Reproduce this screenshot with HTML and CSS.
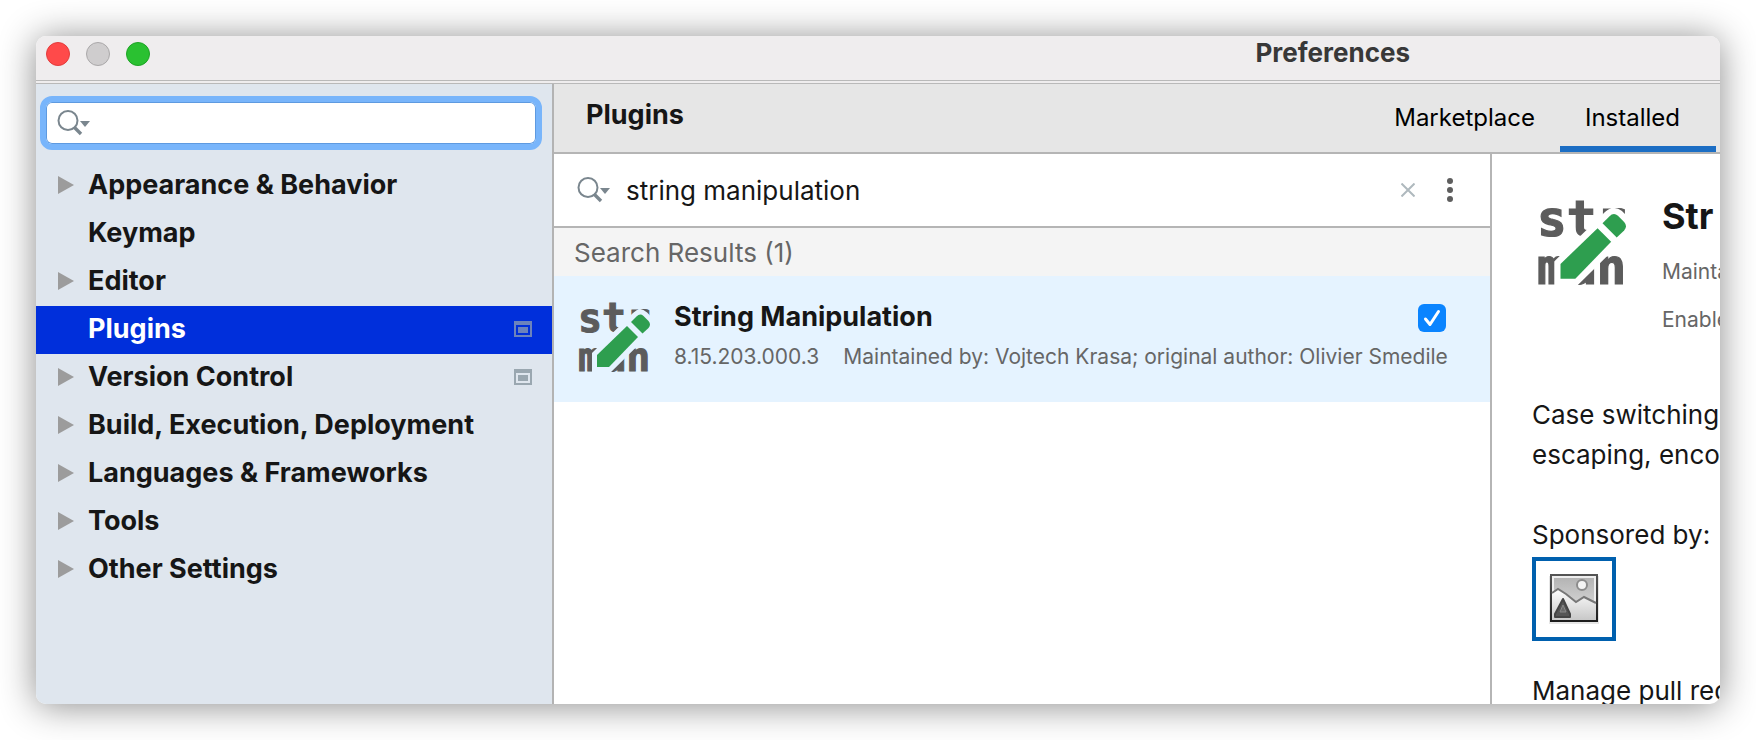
FILE: index.html
```html
<!DOCTYPE html>
<html lang="en">
<head>
<meta charset="utf-8">
<title>Preferences</title>
<link rel="stylesheet" href="styles.css">
</head>
<body>
<svg class="defs" aria-hidden="true">
  <symbol id="search" viewBox="0 0 34 26">
    <circle cx="11" cy="10.500" r="9.500" fill="none" stroke="#7a868e" stroke-width="2"/>
    <path d="M17 17l7 7" stroke="#7a868e" stroke-width="3.400" fill="none"/>
    <path d="M23 11h10l-5 6z" fill="#7a868e"/>
  </symbol>
  <symbol id="arrow" viewBox="0 0 16 18"><path d="M0 0l16 9-16 9z" fill="#9c9c9c"/></symbol>
  <symbol id="project" viewBox="0 0 18 16">
    <path fill="#9aa7b0" fill-rule="evenodd" d="M0 0h18v16H0zM2 4v10h14V4z"/>
    <path fill="#9aa7b0" d="M4 6h10v6H4z"/>
  </symbol>
  <symbol id="pencil" viewBox="0 0 72 72">
    <path class="halo" d="M19 55L58.500 16.500Q62 13 65.500 16L70.500 21Q73.500 24.500 70.500 28L31 67H19z"/>
    <path fill="#2e9e4f" d="M19 55L49 26L60 37L31 67H19z"/>
    <path fill="#2e9e4f" d="M53 22L58.500 16.500Q62 13 65.500 16L70.500 21Q73.500 24.500 70.500 28L64.500 33.500z"/>
  </symbol>
</svg>
<div class="window">
  <header class="titlebar">
    <div class="lights">
      <button class="light close" aria-label="Close"></button>
      <button class="light minimize" aria-label="Minimize"></button>
      <button class="light maximize" aria-label="Zoom"></button>
    </div>
    <div class="window-title">Preferences</div>
  </header>
  <div class="body">
    <aside class="sidebar">
      <div class="settings-search">
        <svg class="search-icon"><use href="#search"/></svg>
        <input type="text" aria-label="Search settings">
      </div>
      <nav>
        <ul class="tree">
          <li><button class="node"><svg class="arrow"><use href="#arrow"/></svg><span class="label">Appearance &amp; Behavior</span></button></li>
          <li><button class="node"><span class="arrow"></span><span class="label">Keymap</span></button></li>
          <li><button class="node"><svg class="arrow"><use href="#arrow"/></svg><span class="label">Editor</span></button></li>
          <li><button class="node selected"><span class="arrow"></span><span class="label">Plugins</span><svg class="project"><use href="#project"/></svg></button></li>
          <li><button class="node"><svg class="arrow"><use href="#arrow"/></svg><span class="label">Version Control</span><svg class="project"><use href="#project"/></svg></button></li>
          <li><button class="node"><svg class="arrow"><use href="#arrow"/></svg><span class="label">Build, Execution, Deployment</span></button></li>
          <li><button class="node"><svg class="arrow"><use href="#arrow"/></svg><span class="label">Languages &amp; Frameworks</span></button></li>
          <li><button class="node"><svg class="arrow"><use href="#arrow"/></svg><span class="label">Tools</span></button></li>
          <li><button class="node"><svg class="arrow"><use href="#arrow"/></svg><span class="label">Other Settings</span></button></li>
        </ul>
      </nav>
    </aside>
    <main class="main">
      <div class="page-head">
        <h1>Plugins</h1>
        <div class="tabs" role="tablist">
          <button class="tab" role="tab">Marketplace</button>
          <button class="tab active" role="tab" aria-selected="true">Installed</button>
        </div>
      </div>
      <div class="panes">
        <section class="results">
          <div class="plugin-search">
            <svg class="search-icon"><use href="#search"/></svg>
            <input type="text" aria-label="Search plugins" value="string manipulation">
            <button class="icon-button" aria-label="Clear"><svg width="14" height="14" viewBox="0 0 14 14"><path d="M0.500 0.500l13 13M13.500 0.500l-13 13" stroke="#afb9be" stroke-width="2"/></svg></button>
            <button class="icon-button" aria-label="More options"><svg width="6" height="24" viewBox="0 0 6 24" fill="#5e5e5e"><circle cx="3" cy="3" r="3"/><circle cx="3" cy="12" r="3"/><circle cx="3" cy="21" r="3"/></svg></button>
          </div>
          <h2 class="group">Search Results (1)</h2>
          <article class="plugin">
            <svg class="logo" viewBox="0 0 72 72">
              <text class="logo-text" x="0" y="32">str</text>
              <text class="logo-text" x="0" y="71">man</text>
              <use href="#pencil"/>
            </svg>
            <div class="info">
              <div class="name-row">
                <label class="name" for="enable">String Manipulation</label>
                <span class="check"><input type="checkbox" id="enable" checked><svg width="28" height="28" viewBox="0 0 28 28" aria-hidden="true"><path d="M7.500 15l4.500 5.500L20.500 7.500" fill="none" stroke="#fff" stroke-width="3" stroke-linecap="round" stroke-linejoin="round"/></svg></span>
              </div>
              <div class="meta"><span>8.15.203.000.3</span><span>Maintained by: Vojtech Krasa; original author: Olivier Smedile</span></div>
            </div>
          </article>
        </section>
        <section class="details">
          <div class="details-head">
            <svg class="logo-large" viewBox="0 0 72 72">
              <text class="logo-text" x="0" y="32">str</text>
              <text class="logo-text" x="0" y="71">man</text>
              <use href="#pencil"/>
            </svg>
            <div>
              <h2 class="details-name">Str</h2>
              <p class="details-meta">Mainta</p>
              <p class="details-meta">Enable</p>
            </div>
          </div>
          <div class="description">
            <p>Case switching<br>escaping, enco</p>
            <p>Sponsored by:</p>
            <a class="sponsor" href="#" aria-label="Sponsor">
              <svg width="52" height="54" viewBox="0 0 52 54">
                <defs>
                  <linearGradient id="sky" x1="0" y1="0" x2="0" y2="1"><stop offset="0" stop-color="#b4b4b4"/><stop offset="1" stop-color="#e2e2e2"/></linearGradient>
                  <linearGradient id="frame" x1="0" y1="0" x2="0" y2="1"><stop offset="0" stop-color="#555"/><stop offset="1" stop-color="#1c1c1c"/></linearGradient>
                  <linearGradient id="hill" x1="0" y1="0" x2="0" y2="1"><stop offset="0" stop-color="#fff"/><stop offset="1" stop-color="#c8c8c8"/></linearGradient>
                </defs>
                <path d="M1 4h50v48H1z" fill="#e6e6e6"/>
                <path d="M2 2h48v48H2z" fill="url(#frame)"/>
                <path d="M4 4h44v44H4z" fill="#eee"/>
                <path d="M6 6h40v40H6z" fill="url(#sky)"/>
                <circle cx="34" cy="13" r="5" fill="#f4f4f4" stroke="#8c8c8c" stroke-width="2"/>
                <path d="M4 21l6-4 8 5 10 8 8-5 12 6v17H4z" fill="url(#hill)"/>
                <path d="M4 21l6-4 8 5 10 8 8-5 12 6" fill="none" stroke="#777" stroke-width="2"/>
                <path d="M15 27l7 15v3H7v-3z" fill="#555" stroke="#444" stroke-width="2" stroke-linejoin="round"/>
                <path d="M15 33l3 7h-6z" fill="#6a6a6a" stroke="#888" stroke-width="1"/>
              </svg>
            </a>
            <p>Manage pull req</p>
          </div>
        </section>
      </div>
    </main>
  </div>
</div>
</body>
</html>
```
FILE: styles.css
```css
* { box-sizing: border-box; }
body {
  margin: 0;
  height: 100vh;
  padding: 36px;
  display: flex;
  background: #fff;
  color: #161616;
  font-family: Inter, "Liberation Sans", sans-serif;
  font-size: 26px;
  overflow: hidden;
}
button, input { font: inherit; color: inherit; }
button { border: 0; padding: 0; background: none; text-align: left; }
h1, h2, p, ul { margin: 0; padding: 0; }
ul { list-style: none; }
svg { display: block; flex: none; }
.defs { position: absolute; width: 0; height: 0; }

.window {
  flex: 1;
  min-width: 0;
  display: flex;
  flex-direction: column;
  overflow: hidden;
  border-radius: 10px;
  background: #fff;
  box-shadow: 0 2px 36px rgba(0, 0, 0, 0.46);
}
.titlebar {
  flex: none;
  height: 48px;
  padding: 6px 310px 0 10px;
  display: flex;
  justify-content: space-between;
  background: #efedee;
  border-bottom: 4px double #b9b9b9;
}
.lights { display: flex; gap: 16px; }
.light { width: 24px; height: 24px; border-radius: 50%; border: 1px solid; }
.close { background: #ff4a4a; border-color: #e23c3c; }
.minimize { background: #cfcdce; border-color: #aaa8a9; }
.maximize { background: #2ac131; border-color: #1ea325; }
.window-title { color: #383838; font-weight: 700; line-height: 22px; }

.body { flex: 1; min-height: 0; display: flex; }
.sidebar {
  flex: none;
  width: 518px;
  padding-top: 12px;
  background: #dfe6ee;
  border-right: 2px solid #b3b3b3;
}
.settings-search {
  height: 54px;
  margin: 0 10px 12px 4px;
  padding-left: 11px;
  display: flex;
  align-items: center;
  border: 6px solid #78b5fb;
  border-radius: 12px;
  background: #fff;
  box-shadow: inset 0 0 0 1px #5e9ae0;
}
.search-icon { width: 34px; height: 26px; }
.settings-search input, .plugin-search input {
  flex: 1;
  min-width: 0;
  padding: 0;
  border: 0;
  outline: 0;
  background: none;
}
.node {
  width: 100%;
  height: 48px;
  padding: 0 20px 3px 22px;
  display: flex;
  align-items: center;
  font-size: 27px;
  font-weight: 700;
}
.node.selected { background: #002fdb; color: #fff; }
.node.selected .project { opacity: 0.7; }
.arrow { width: 16px; height: 18px; margin-right: 14px; }
.label { flex: 1; white-space: nowrap; }
.project { width: 18px; height: 16px; }

.main { flex: 1; min-width: 0; display: flex; flex-direction: column; }
.page-head {
  flex: none;
  height: 70px;
  padding: 0 4px 0 32px;
  display: flex;
  justify-content: space-between;
  background: #e6e6e6;
  border-bottom: 2px solid #b5b5b5;
}
h1 { font-size: 27px; font-weight: 700; line-height: 62px; }
.tabs { display: flex; }
.tab {
  padding: 5px 25px 0;
  border-bottom: 6px solid transparent;
  color: #000;
  font-size: 24px;
}
.tab.active { padding-right: 36px; border-color: #1c6ec4; }

.panes { flex: 1; min-height: 0; display: flex; }
.results { flex: 1; min-width: 0; border-right: 2px solid #b5b5b5; }
.plugin-search {
  height: 74px;
  padding: 0 37px 0 23px;
  display: flex;
  align-items: center;
  border-bottom: 2px solid #b5b5b5;
}
.plugin-search input { margin-left: 15px; }
.icon-button + .icon-button { margin-left: 32px; }
.group {
  padding: 2px 0 0 20px;
  background: #f4f4f4;
  color: #666;
  font-size: 26px;
  font-weight: 400;
  line-height: 46px;
}
.plugin {
  height: 126px;
  padding: 24px 38px 24px 24px;
  display: flex;
  gap: 24px;
  background: #e5f3ff;
}
.logo { width: 72px; height: 72px; overflow: visible; color: #e5f3ff; }
.logo-text { font: bold 40px "DejaVu Sans Mono", monospace; fill: #5c5c5c; stroke: #5c5c5c; }
.halo { fill: currentColor; stroke: currentColor; stroke-width: 10px; }
.info { flex: 1; min-width: 0; }
.name-row { display: flex; justify-content: space-between; padding-right: 6px; }
.name { font-size: 27px; font-weight: 700; line-height: 34px; }
.check { display: grid; margin-top: 4px; }
.check input, .check svg { grid-area: 1 / 1; pointer-events: none; }
.check input {
  appearance: none;
  width: 28px;
  height: 28px;
  margin: 0;
  border-radius: 6px;
  background: #0a84ff;
  pointer-events: auto;
}
.meta {
  margin-top: 6px;
  display: flex;
  gap: 24px;
  color: #666;
  font-size: 21px;
  line-height: 34px;
  white-space: nowrap;
}

.details { flex: none; width: 228px; overflow: hidden; padding: 42px 0 0 40px; white-space: nowrap; }
.details-head { display: flex; gap: 36px; padding-left: 5px; }
.logo-large { width: 89px; height: 89px; overflow: visible; color: #fff; }
.details-name { margin-bottom: 18px; font-size: 36px; font-weight: 700; line-height: 40px; }
.details-meta { margin-bottom: 12px; color: #666; font-size: 21px; line-height: 36px; }
.description { margin-top: 45px; line-height: 40px; }
.description p + p { margin-top: 40px; }
.sponsor {
  width: 84px;
  height: 84px;
  margin: 2px 0 30px;
  display: grid;
  place-items: center;
  border: 4px solid #0060ae;
}
```
